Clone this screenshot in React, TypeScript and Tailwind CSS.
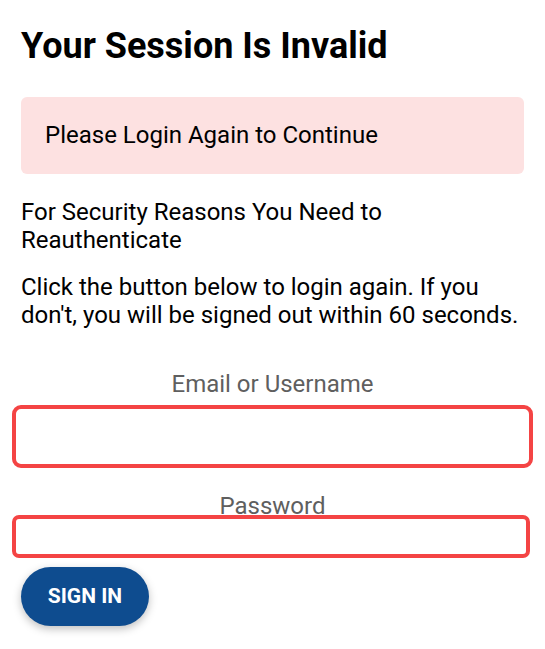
export default function App() {
  return (
    <div className="min-h-screen bg-white font-['Roboto',sans-serif] text-black">
      <div className="px-[21px] pt-[25px]">
        <h1 className="text-[36px] font-bold leading-[43px]">Your Session Is Invalid</h1>

        <div className="mt-[29px] rounded-[6px] bg-[#fde1e1] px-6 py-6 text-[24px] leading-[29px]">
          Please Login Again to Continue
        </div>

        <p className="mt-[24px] text-[24px] leading-[28px]">
          For Security Reasons You Need to Reauthenticate
        </p>
        <p className="mt-[19px] text-[24px] leading-[28px]">
          Click the button below to login again. If you don't, you will be signed out within 60 seconds.
        </p>

        <form className="mt-[41px] flex flex-col">
          <label className="text-center text-[24px] leading-[28px] text-[#5f5f5f]">Email or Username</label>
          <input
            type="text"
            className="-ml-[9px] -mr-[9px] mt-[7px] h-[63px] rounded-[9px] border-4 border-[#f44444] outline-none"
          />
          <label className="mt-[24px] text-center text-[24px] leading-[28px] text-[#5f5f5f]">Password</label>
          <input
            type="password"
            className="-ml-[9px] -mr-[6px] -mt-[5px] h-[43px] rounded-[7px] border-4 border-[#f44444] outline-none"
          />
          <div className="mt-[9px]">
            <button
              type="button"
              className="h-[59px] w-[128px] rounded-full bg-[#0e4c8f] text-[21px] font-bold text-white shadow-[0_3px_8px_rgba(0,0,0,0.25)]"
            >
              SIGN IN
            </button>
          </div>
        </form>
      </div>
    </div>
  );
}
